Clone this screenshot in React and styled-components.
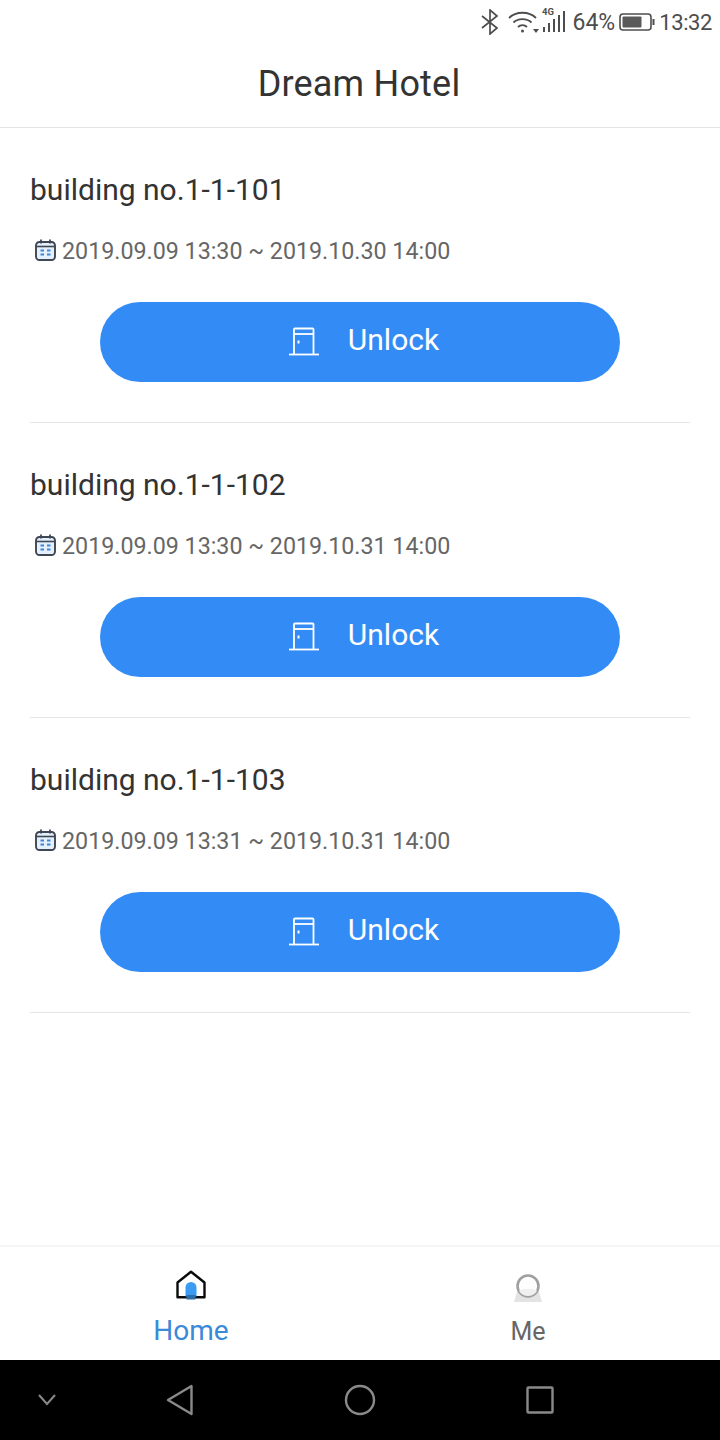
import React from "react";
import styled, { createGlobalStyle } from "styled-components";

const Global = createGlobalStyle`
  html, body { margin: 0; padding: 0; background: #fff; }
  body { font-family: Roboto, "Liberation Sans", sans-serif; }
`;

const Screen = styled.div`
  width: 720px;
  height: 1440px;
  display: flex;
  flex-direction: column;
  background: #fff;
  overflow: hidden;
`;

const StatusBar = styled.div`
  height: 40px;
  display: flex;
  align-items: center;
  justify-content: flex-end;
  padding: 3px 8px 0 0;
  box-sizing: border-box;
  color: #4d4d4d;
`;

const StatusIcon = styled.svg`
  display: block;
  flex: none;
  margin-right: ${(p) => p.$mr || 0}px;
`;

const StatusText = styled.span`
  margin-right: ${(p) => p.$mr || 0}px;
  line-height: 35px;
  padding-top: 2px;
  font-size: ${(p) => p.$size}px;
  letter-spacing: ${(p) => p.$spacing || 0}px;
`;

const Header = styled.header`
  height: 88px;
  display: flex;
  align-items: center;
  justify-content: center;
  border-bottom: 1px solid #e4e4e4;
  font-size: 36px;
  color: #333;
  letter-spacing: 0.2px;
  padding: 0 2px 0 0;
  box-sizing: border-box;
`;

const List = styled.main`
  flex: 1;
  padding: 0 30px;
`;

const Card = styled.section`
  height: 294px;
  border-bottom: 1px solid #e6e6e6;
  display: flex;
  flex-direction: column;
`;

const Name = styled.div`
  margin-top: 42px;
  height: 40px;
  line-height: 40px;
  font-size: 30px;
  color: #333;
`;

const DateRow = styled.div`
  margin-top: 23px;
  height: 34px;
  display: flex;
  align-items: center;
  padding-left: 5px;
  gap: 6px;
  font-size: 23.25px;
  color: #666;
`;

const DateText = styled.span`
  padding-top: 2px;
`;

const UnlockButton = styled.button`
  align-self: center;
  margin-top: 35px;
  width: 520px;
  height: 80px;
  border: 0;
  border-radius: 40px;
  background: #338cf6;
  color: #fff;
  font: inherit;
  font-size: 30px;
  display: flex;
  align-items: center;
  justify-content: center;
  gap: 29px;
  padding: 0 0 4px 8px;
`;

const UnlockLabel = styled.span`
  margin-top: -2px;
`;

const DoorIcon = styled.svg`
  display: block;
  margin-top: 1px;
`;

const TabBar = styled.nav`
  height: 113px;
  border-top: 2px solid #f6f6f6;
  display: grid;
  grid-template-columns: 382px 1fr;
`;

const Tab = styled.div`
  display: flex;
  flex-direction: column;
  align-items: center;
  padding-top: ${(p) => p.$pt}px;
  padding-right: ${(p) => p.$pr || 0}px;
`;

const TabLabel = styled.div`
  font-size: ${(p) => p.$size}px;
  line-height: 34px;
  margin-top: ${(p) => p.$mt}px;
  color: ${(p) => p.$color};
`;

const NavBar = styled.div`
  height: 80px;
  background: #000;
  display: grid;
  grid-template-columns: 90px 180px 180px 180px;
  align-items: center;
  justify-items: center;
`;

const Chevron = styled.svg`
  margin-left: 4px;
`;

const Calendar = () => (
  <svg width="21" height="22" viewBox="0 0 21 22" fill="none">
    <rect x="1" y="3" width="19" height="18" rx="3.500" fill="#e4f0fc" stroke="#3f4654" strokeWidth="1.900" />
    <path d="M1.500 7.500h18" stroke="#3f4654" strokeWidth="1.600" />
    <path d="M6 0.500v4M15 0.500v4" stroke="#3f4654" strokeWidth="1.800" />
    <path d="M5.500 11.500h3.500M12 11.500h3.500M5.500 15.500h3.500M12 15.500h3.500" stroke="#3c86d8" strokeWidth="2.200" />
  </svg>
);

const Door = () => (
  <DoorIcon width="30" height="30" viewBox="0 0 30 30" fill="none" stroke="#fff" strokeWidth="1.800">
    <path d="M0 28.500h30" />
    <path d="M5 28.500V3.500a1 1 0 0 1 1-1h17.500a1 1 0 0 1 1 1v25" />
    <path d="M5 8h19.500" />
    <path d="M9.500 14.500v3" strokeWidth="2" />
  </DoorIcon>
);

const HomeIcon = () => (
  <svg width="30" height="30" viewBox="0 0 30 30" fill="none">
    <path d="M1.500 12.500 15 1.700l13.500 10.800v14.800h-27z" stroke="#0a0a0a" strokeWidth="2.400" strokeLinejoin="round" />
    <path d="M9.500 26.500v-9a5.500 5.500 0 0 1 11 0v9z" fill="#3b9bf2" />
    <rect x="10.500" y="25" width="9" height="4.500" fill="#2a6ea8" />
  </svg>
);

const MeIcon = () => (
  <svg width="28" height="30" viewBox="0 0 28 30" fill="none">
    <path d="M3 18c3-2 19-2 22 0l3 10H0z" fill="#e3e3e3" />
    <circle cx="14" cy="12" r="10.500" fill="#fff" stroke="#a0a0a0" strokeWidth="2.600" />
    <path d="M5 17c3-3 15-3 18 0a10.500 10.500 0 0 1-18 0z" fill="#efefef" />
  </svg>
);

const rooms = [
  ["building no.1-1-101", "2019.09.09 13:30 ~ 2019.10.30 14:00"],
  ["building no.1-1-102", "2019.09.09 13:30 ~ 2019.10.31 14:00"],
  ["building no.1-1-103", "2019.09.09 13:31 ~ 2019.10.31 14:00"],
];

export default function App() {
  return (
    <Screen>
      <Global />
      <StatusBar>
        <StatusIcon $mr={8} width="20" height="26" viewBox="0 0 20 26" fill="none" stroke="#4d4d4d" strokeWidth="1.700">
          <path d="M2 7l15 12-7 6V1l7 6L2 19" />
        </StatusIcon>
        <StatusIcon $mr={0} width="34" height="24" viewBox="0 0 34 24" fill="none" stroke="#4d4d4d" strokeWidth="1.800">
          <path d="M1 8c7-7 20-7 27 0M5.500 12.500c4.500-4.500 13.500-4.500 18 0M10 17c2.500-2.500 6.500-2.500 9 0" />
          <circle cx="14.500" cy="21" r="1.500" fill="#4d4d4d" stroke="none" />
          <path d="M25 19h6l-3 4z" fill="#4d4d4d" stroke="none" />
        </StatusIcon>
        <StatusIcon $mr={7} width="24" height="34" viewBox="0 0 24 34" fill="#4d4d4d">
          <text x="0" y="10" fontSize="9.500" fontWeight="700" fontFamily="Roboto, sans-serif">4G</text>
          <rect x="1" y="22" width="2" height="5" />
          <rect x="6" y="18" width="2" height="9" />
          <rect x="11" y="14" width="2" height="13" />
          <rect x="16" y="10" width="2" height="17" />
          <rect x="21" y="6" width="2" height="21" />
        </StatusIcon>
        <StatusText $mr={4} $size={23}>64%</StatusText>
        <StatusIcon $mr={4} width="36" height="18" viewBox="0 0 36 18" fill="none">
          <rect x="1" y="1" width="31" height="16" rx="3" stroke="#4d4d4d" strokeWidth="1.600" />
          <rect x="3.500" y="3.500" width="19" height="11" rx="1" fill="#5a5a5a" />
          <rect x="33.500" y="6" width="2" height="6" fill="#4d4d4d" />
        </StatusIcon>
        <StatusText $size={22} $spacing={-0.4}>13:32</StatusText>
      </StatusBar>
      <Header>Dream Hotel</Header>
      <List>
        {rooms.map(([name, date]) => (
          <Card key={name}>
            <Name>{name}</Name>
            <DateRow>
              <Calendar />
              <DateText>{date}</DateText>
            </DateRow>
            <UnlockButton>
              <Door />
              <UnlockLabel>Unlock</UnlockLabel>
            </UnlockButton>
          </Card>
        ))}
      </List>
      <TabBar>
        <Tab $pt={23}>
          <HomeIcon />
          <TabLabel $size={28} $mt={14} $color="#3a8ad8">Home</TabLabel>
        </Tab>
        <Tab $pt={27} $pr={46}>
          <MeIcon />
          <TabLabel $size={25} $mt={11} $color="#666">Me</TabLabel>
        </Tab>
      </TabBar>
      <NavBar>
        <Chevron width="20" height="14" viewBox="0 0 20 14" fill="none" stroke="#8a8a8a" strokeWidth="2">
          <path d="M2 2l8 9 8-9" />
        </Chevron>
        <svg width="28" height="32" viewBox="0 0 28 32" fill="none" stroke="#8a8a8a" strokeWidth="2.400" strokeLinejoin="round">
          <path d="M25.500 2v28L2 16z" />
        </svg>
        <svg width="32" height="32" viewBox="0 0 32 32" fill="none" stroke="#8a8a8a" strokeWidth="2.400">
          <circle cx="16" cy="16" r="14" />
        </svg>
        <svg width="28" height="28" viewBox="0 0 28 28" fill="none" stroke="#8a8a8a" strokeWidth="2.400" strokeLinejoin="round">
          <rect x="1.500" y="1.500" width="25" height="25" rx="1" />
        </svg>
      </NavBar>
    </Screen>
  );
}
